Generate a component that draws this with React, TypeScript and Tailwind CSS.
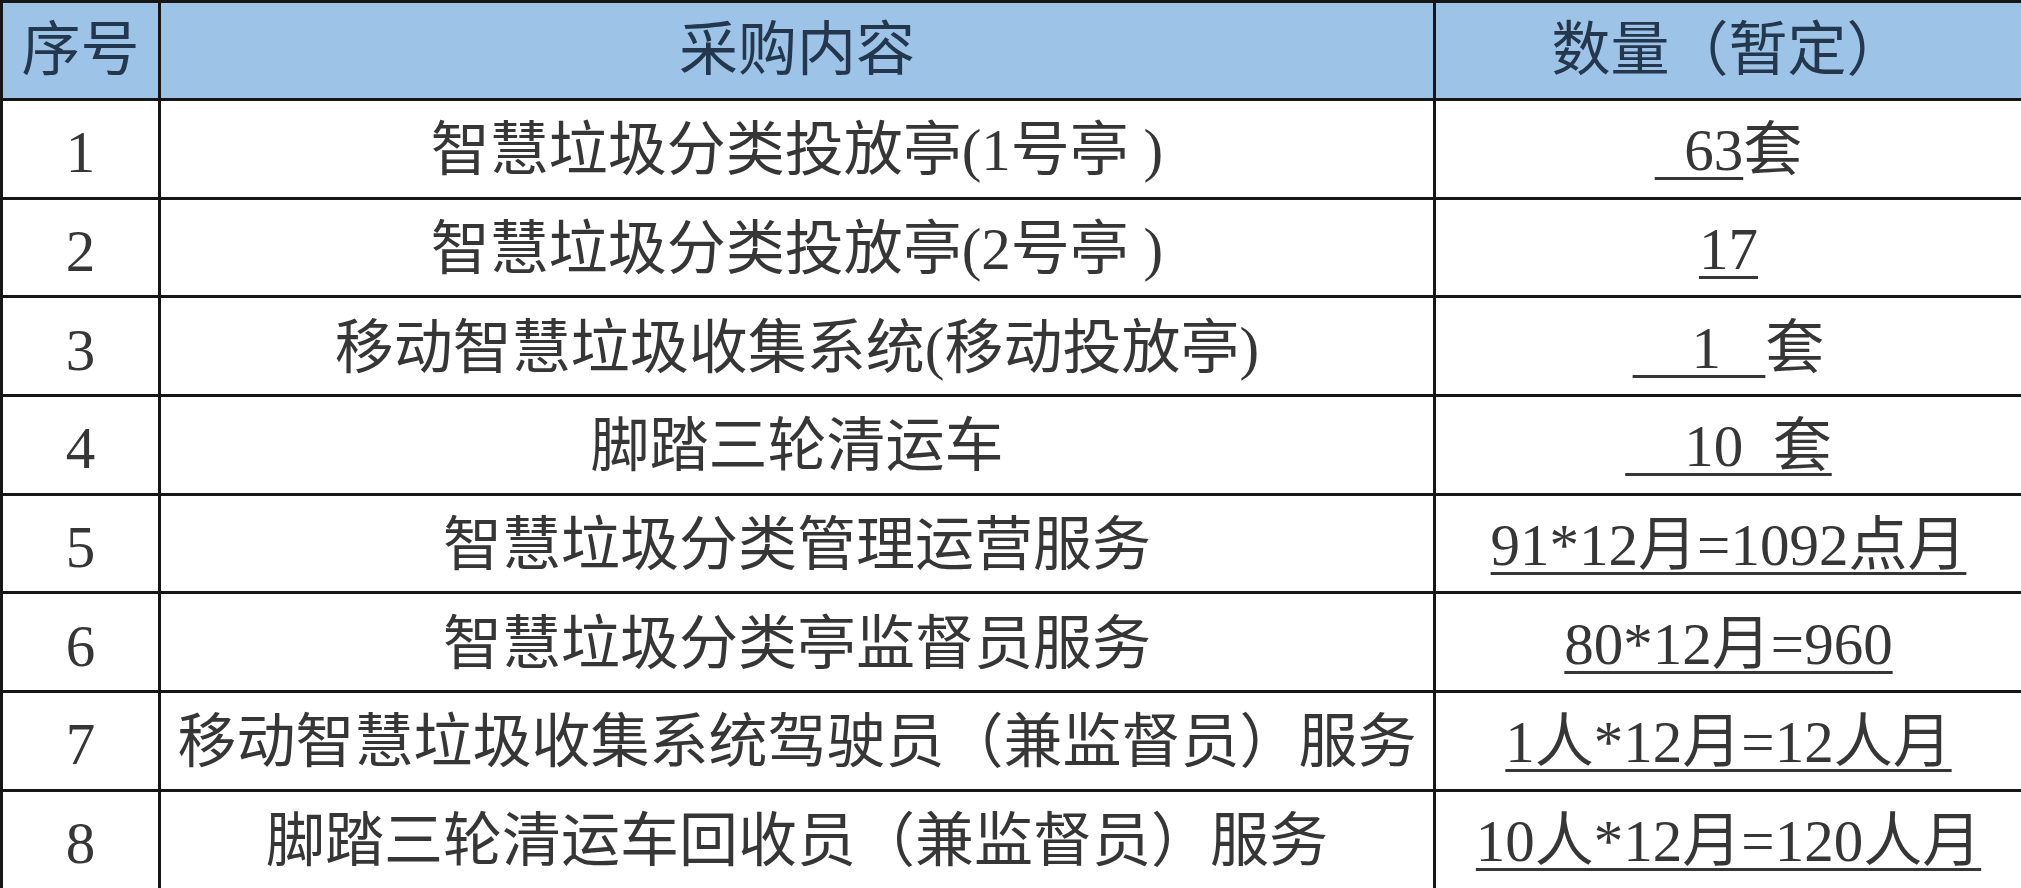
import type { ReactNode } from "react";

type Row = { no: string; item: string; qty: ReactNode };

const u = "underline decoration-[3px] underline-offset-[7px]";

const rows: Row[] = [
  {
    no: "1",
    item: "智慧垃圾分类投放亭(1号亭 )",
    qty: (
      <>
        <span className={u}>{"\u00a0\u00a063"}</span>套
      </>
    ),
  },
  { no: "2", item: "智慧垃圾分类投放亭(2号亭 )", qty: <span className={u}>17</span> },
  {
    no: "3",
    item: "移动智慧垃圾收集系统(移动投放亭)",
    qty: (
      <>
        <span className={u}>{"\u00a0\u00a0\u00a0\u00a01\u00a0\u00a0\u00a0"}</span>套
      </>
    ),
  },
  {
    no: "4",
    item: "脚踏三轮清运车",
    qty: <span className={u}>{"\u00a0\u00a0\u00a0\u00a010\u00a0\u00a0套"}</span>,
  },
  { no: "5", item: "智慧垃圾分类管理运营服务", qty: <span className={u}>91*12月=1092点月</span> },
  { no: "6", item: "智慧垃圾分类亭监督员服务", qty: <span className={u}>80*12月=960</span> },
  {
    no: "7",
    item: "移动智慧垃圾收集系统驾驶员（兼监督员）服务",
    qty: <span className={u}>1人*12月=12人月</span>,
  },
  {
    no: "8",
    item: "脚踏三轮清运车回收员（兼监督员）服务",
    qty: <span className={u}>10人*12月=120人月</span>,
  },
];

const cell = "border-[3px] border-[#161616] text-center align-middle p-0 whitespace-pre";

export default function App() {
  return (
    <div className="w-[2021px] h-[888px] overflow-hidden bg-white font-['Liberation_Serif','Noto_Sans_CJK_SC',serif] text-[59px] leading-none text-[#363636]">
      <table className="table-fixed border-collapse w-[2021px]">
        <colgroup>
          <col className="w-[158px]" />
          <col className="w-[1275px]" />
          <col className="w-[588px]" />
        </colgroup>
        <thead>
          <tr className="h-[98px] bg-[#9dc3e6] text-[#23384f]">
            <th className={`${cell} font-normal`}>序号</th>
            <th className={`${cell} font-normal`}>采购内容</th>
            <th className={`${cell} font-normal`}>数量（暂定）</th>
          </tr>
        </thead>
        <tbody>
          {rows.map((r) => (
            <tr key={r.no} className="h-[98.7px]">
              <td className={cell}>
                <span className="relative top-[4px]">{r.no}</span>
              </td>
              <td className={cell}>
                <span className="relative top-[2px]">{r.item}</span>
              </td>
              <td className={cell}>
                <span className="relative top-[2px]">{r.qty}</span>
              </td>
            </tr>
          ))}
        </tbody>
      </table>
    </div>
  );
}
